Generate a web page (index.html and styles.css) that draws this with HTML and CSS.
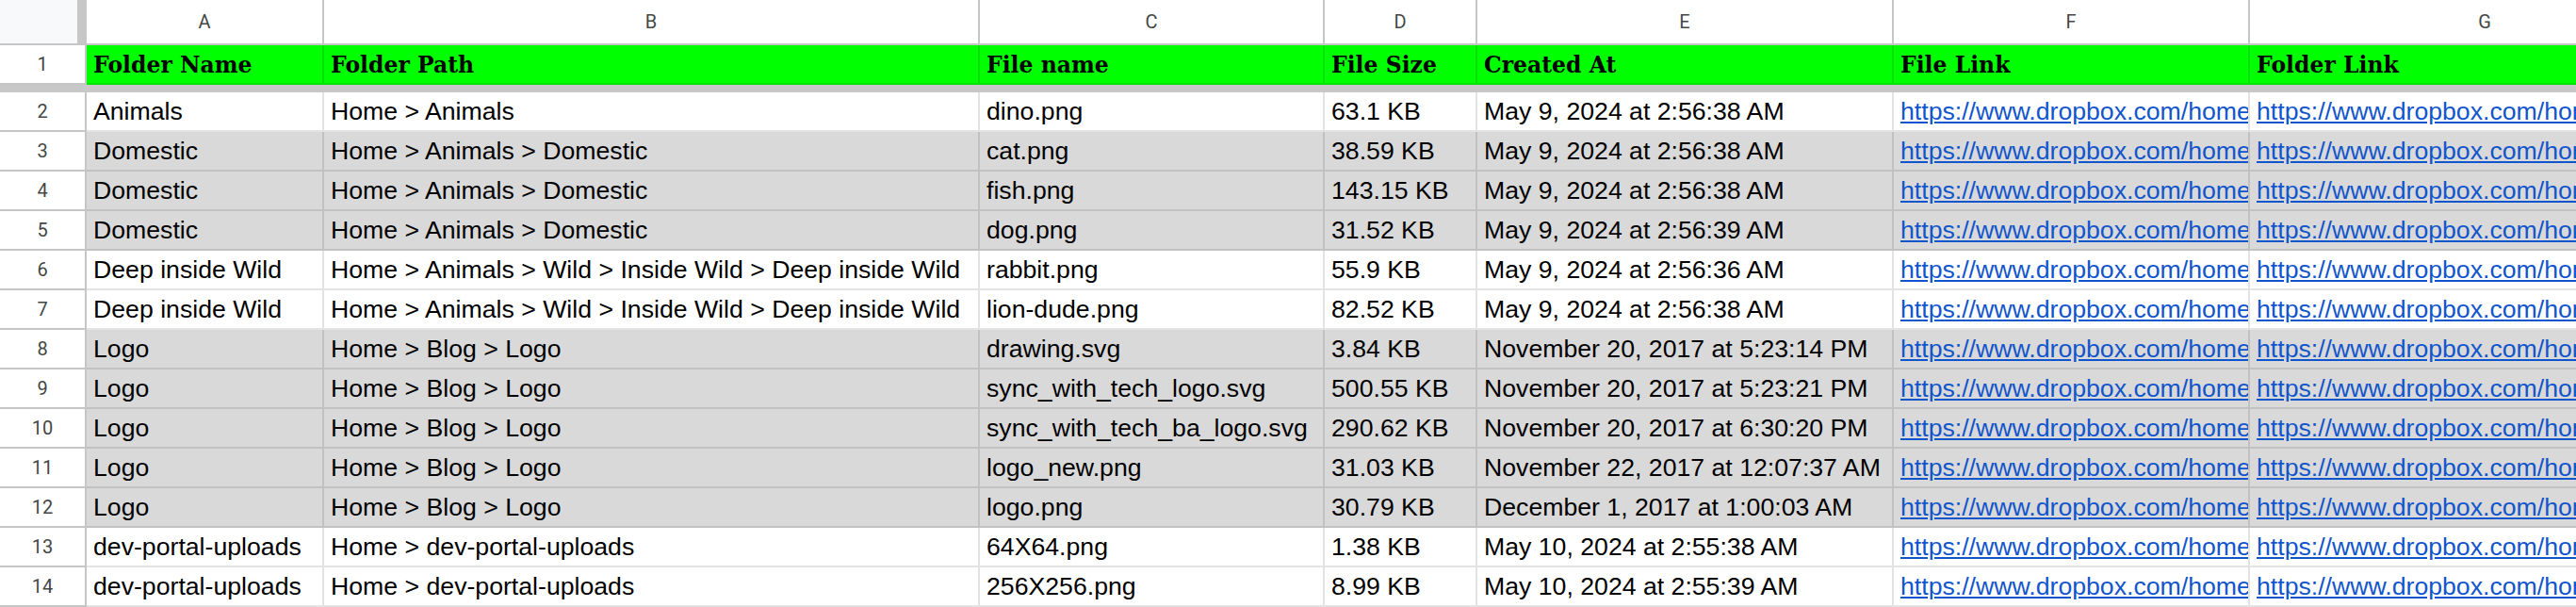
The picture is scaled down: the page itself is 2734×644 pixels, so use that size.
FILE: index.html
```html
<!DOCTYPE html>
<html>
<head>
<meta charset="utf-8">
<link rel="stylesheet" href="styles.css">
</head>
<body>
<div class="sheet">
  <div class="row colhdr">
    <div class="corner"></div>
    <div class="ch">A</div><div class="ch">B</div><div class="ch">C</div><div class="ch">D</div><div class="ch">E</div><div class="ch">F</div><div class="ch">G</div>
  </div>
  <div class="row hdr">
    <div class="rh">1</div>
    <div class="c">Folder Name</div><div class="c">Folder Path</div><div class="c">File name</div><div class="c">File Size</div><div class="c">Created At</div><div class="c">File Link</div><div class="c">Folder Link</div>
  </div>
  <div class="freeze"></div>
  <div class="row">
    <div class="rh">2</div>
    <div class="c">Animals</div><div class="c">Home &gt; Animals</div><div class="c">dino.png</div><div class="c">63.1 KB</div><div class="c">May 9, 2024 at 2:56:38 AM</div><div class="c"><span class="link">https://www.dropbox.com/home/Animals</span></div><div class="c"><span class="link">https://www.dropbox.com/home/Animals</span></div>
  </div>
  <div class="row g">
    <div class="rh">3</div>
    <div class="c">Domestic</div><div class="c">Home &gt; Animals &gt; Domestic</div><div class="c">cat.png</div><div class="c">38.59 KB</div><div class="c">May 9, 2024 at 2:56:38 AM</div><div class="c"><span class="link">https://www.dropbox.com/home/Animals</span></div><div class="c"><span class="link">https://www.dropbox.com/home/Animals</span></div>
  </div>
  <div class="row g">
    <div class="rh">4</div>
    <div class="c">Domestic</div><div class="c">Home &gt; Animals &gt; Domestic</div><div class="c">fish.png</div><div class="c">143.15 KB</div><div class="c">May 9, 2024 at 2:56:38 AM</div><div class="c"><span class="link">https://www.dropbox.com/home/Animals</span></div><div class="c"><span class="link">https://www.dropbox.com/home/Animals</span></div>
  </div>
  <div class="row g">
    <div class="rh">5</div>
    <div class="c">Domestic</div><div class="c">Home &gt; Animals &gt; Domestic</div><div class="c">dog.png</div><div class="c">31.52 KB</div><div class="c">May 9, 2024 at 2:56:39 AM</div><div class="c"><span class="link">https://www.dropbox.com/home/Animals</span></div><div class="c"><span class="link">https://www.dropbox.com/home/Animals</span></div>
  </div>
  <div class="row">
    <div class="rh">6</div>
    <div class="c">Deep inside Wild</div><div class="c">Home &gt; Animals &gt; Wild &gt; Inside Wild &gt; Deep inside Wild</div><div class="c">rabbit.png</div><div class="c">55.9 KB</div><div class="c">May 9, 2024 at 2:56:36 AM</div><div class="c"><span class="link">https://www.dropbox.com/home/Animals</span></div><div class="c"><span class="link">https://www.dropbox.com/home/Animals</span></div>
  </div>
  <div class="row">
    <div class="rh">7</div>
    <div class="c">Deep inside Wild</div><div class="c">Home &gt; Animals &gt; Wild &gt; Inside Wild &gt; Deep inside Wild</div><div class="c">lion-dude.png</div><div class="c">82.52 KB</div><div class="c">May 9, 2024 at 2:56:38 AM</div><div class="c"><span class="link">https://www.dropbox.com/home/Animals</span></div><div class="c"><span class="link">https://www.dropbox.com/home/Animals</span></div>
  </div>
  <div class="row g">
    <div class="rh">8</div>
    <div class="c">Logo</div><div class="c">Home &gt; Blog &gt; Logo</div><div class="c">drawing.svg</div><div class="c">3.84 KB</div><div class="c">November 20, 2017 at 5:23:14 PM</div><div class="c"><span class="link">https://www.dropbox.com/home/Blog</span></div><div class="c"><span class="link">https://www.dropbox.com/home/Blog</span></div>
  </div>
  <div class="row g">
    <div class="rh">9</div>
    <div class="c">Logo</div><div class="c">Home &gt; Blog &gt; Logo</div><div class="c">sync_with_tech_logo.svg</div><div class="c">500.55 KB</div><div class="c">November 20, 2017 at 5:23:21 PM</div><div class="c"><span class="link">https://www.dropbox.com/home/Blog</span></div><div class="c"><span class="link">https://www.dropbox.com/home/Blog</span></div>
  </div>
  <div class="row g">
    <div class="rh">10</div>
    <div class="c">Logo</div><div class="c">Home &gt; Blog &gt; Logo</div><div class="c">sync_with_tech_ba_logo.svg</div><div class="c">290.62 KB</div><div class="c">November 20, 2017 at 6:30:20 PM</div><div class="c"><span class="link">https://www.dropbox.com/home/Blog</span></div><div class="c"><span class="link">https://www.dropbox.com/home/Blog</span></div>
  </div>
  <div class="row g">
    <div class="rh">11</div>
    <div class="c">Logo</div><div class="c">Home &gt; Blog &gt; Logo</div><div class="c">logo_new.png</div><div class="c">31.03 KB</div><div class="c">November 22, 2017 at 12:07:37 AM</div><div class="c"><span class="link">https://www.dropbox.com/home/Blog</span></div><div class="c"><span class="link">https://www.dropbox.com/home/Blog</span></div>
  </div>
  <div class="row g">
    <div class="rh">12</div>
    <div class="c">Logo</div><div class="c">Home &gt; Blog &gt; Logo</div><div class="c">logo.png</div><div class="c">30.79 KB</div><div class="c">December 1, 2017 at 1:00:03 AM</div><div class="c"><span class="link">https://www.dropbox.com/home/Blog</span></div><div class="c"><span class="link">https://www.dropbox.com/home/Blog</span></div>
  </div>
  <div class="row">
    <div class="rh">13</div>
    <div class="c">dev-portal-uploads</div><div class="c">Home &gt; dev-portal-uploads</div><div class="c">64X64.png</div><div class="c">1.38 KB</div><div class="c">May 10, 2024 at 2:55:38 AM</div><div class="c"><span class="link">https://www.dropbox.com/home/dev-portal-uploads</span></div><div class="c"><span class="link">https://www.dropbox.com/home/dev-portal-uploads</span></div>
  </div>
  <div class="row">
    <div class="rh">14</div>
    <div class="c">dev-portal-uploads</div><div class="c">Home &gt; dev-portal-uploads</div><div class="c">256X256.png</div><div class="c">8.99 KB</div><div class="c">May 10, 2024 at 2:55:39 AM</div><div class="c"><span class="link">https://www.dropbox.com/home/dev-portal-uploads</span></div><div class="c"><span class="link">https://www.dropbox.com/home/dev-portal-uploads</span></div>
  </div>
</div>
</body>
</html>
```

FILE: styles.css
```css
html, body {
  margin: 0;
  padding: 0;
  background: #ffffff;
  overflow: hidden;
}
.sheet {
  width: 2734px;
  height: 644px;
  overflow: hidden;
  font-family: "Liberation Sans", Arial, sans-serif;
}
.row {
  display: grid;
  grid-template-columns: 92px 252px 696px 366px 162px 442px 378px 500px;
  height: 42px;
}
.rh {
  box-sizing: border-box;
  border-right: 2px solid #c4c7c5;
  border-bottom: 2px solid #c4c7c5;
  background: #ffffff;
  display: flex;
  align-items: center;
  justify-content: center;
  font-family: Roboto, "Liberation Sans", sans-serif;
  font-size: 20px;
  color: #444746;
}
.c {
  box-sizing: border-box;
  border-right: 2px solid rgba(0, 0, 0, 0.11);
  border-bottom: 2px solid rgba(0, 0, 0, 0.11);
  display: flex;
  align-items: flex-end;
  padding: 0 6px 4px 7px;
  font-size: 26.67px;
  color: #000000;
  white-space: nowrap;
  overflow: hidden;
}
.g .c {
  background: #d9d9d9;
}
.link {
  color: #1155cc;
  text-decoration: underline;
}
.colhdr {
  height: 48px;
}
.corner {
  box-sizing: border-box;
  background: #f8f9fa;
  border-right: 10px solid #c7c7c7;
  border-bottom: 2px solid #c4c7c5;
}
.ch {
  box-sizing: border-box;
  border-right: 2px solid #c4c7c5;
  border-bottom: 2px solid #c4c7c5;
  display: flex;
  align-items: center;
  justify-content: center;
  font-family: Roboto, "Liberation Sans", sans-serif;
  font-size: 20px;
  color: #444746;
}
.hdr .c {
  background: #00ff00;
  font-family: "DejaVu Serif", serif;
  font-weight: bold;
  font-size: 23.5px;
  padding-bottom: 5px;
}
.freeze {
  height: 8px;
  background: #c8c8c8;
}
```
